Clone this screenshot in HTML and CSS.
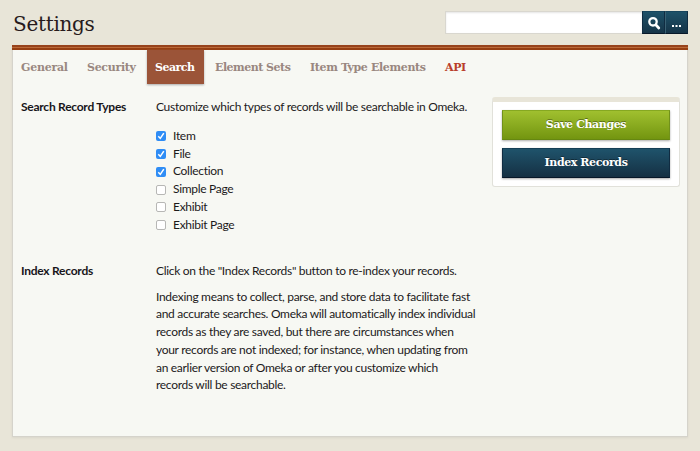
FILE: index.html
```html
<!DOCTYPE html>
<html lang="en">
<head>
<meta charset="utf-8">
<title>Settings</title>
<link rel="stylesheet" href="styles.css">
</head>
<body>
<header class="top">
  <h1 class="title">Settings</h1>
  <form class="search">
    <input class="search-input" type="text" aria-label="Search">
    <button class="search-btn" type="button" aria-label="Submit search"><svg width="14" height="14" viewBox="0 0 14 14"><circle cx="6" cy="5.8" r="3.7" fill="none" stroke="#fff" stroke-width="2.3"/><path d="M9 9l2.8 3" stroke="#fff" stroke-width="2.7" stroke-linecap="round"/></svg></button>
    <button class="search-btn more" type="button" aria-label="Advanced"><svg width="12" height="12" viewBox="0 0 12 12" fill="#fff"><path d="M1 8h2v2H1zM4.500 8h2v2h-2zM8 8h2v2H8z"/></svg></button>
  </form>
</header>
<main class="content">
  <nav class="tabs">
    <a class="tab general">General</a>
    <a class="tab security">Security</a>
    <a class="tab active">Search</a>
    <a class="tab sets">Element Sets</a>
    <a class="tab types">Item Type Elements</a>
    <a class="tab api">API</a>
  </nav>
  <div class="columns">
    <div class="fields">
      <section class="field first">
        <h2 class="label">Search Record Types</h2>
        <div class="inputs">
          <p class="lead">Customize which types of records will be searchable in Omeka.</p>
          <ul class="checks">
            <li class="check"><i class="box on"><svg width="10" height="10" viewBox="0 0 10 10"><path d="M2.300 5.200l2 2.200 3.500-5.300" fill="none" stroke="#fff" stroke-width="1.500"/></svg></i>Item</li>
            <li class="check"><i class="box on"><svg width="10" height="10" viewBox="0 0 10 10"><path d="M2.300 5.200l2 2.200 3.500-5.300" fill="none" stroke="#fff" stroke-width="1.500"/></svg></i>File</li>
            <li class="check"><i class="box on"><svg width="10" height="10" viewBox="0 0 10 10"><path d="M2.300 5.200l2 2.200 3.500-5.300" fill="none" stroke="#fff" stroke-width="1.500"/></svg></i>Collection</li>
            <li class="check"><i class="box"></i>Simple Page</li>
            <li class="check"><i class="box"></i>Exhibit</li>
            <li class="check"><i class="box"></i>Exhibit Page</li>
          </ul>
        </div>
      </section>
      <section class="field">
        <h2 class="label index">Index Records</h2>
        <div class="inputs">
          <p class="click">Click on the "Index Records" button to re-index your records.</p>
          <p class="about">Indexing means to collect, parse, and store data to facilitate fast<br>and accurate searches. Omeka will automatically index individual<br>records as they are saved, but there are circumstances when<br>your records are not indexed; for instance, when updating from<br>an earlier version of Omeka or after you customize which<br>records will be searchable.</p>
        </div>
      </section>
    </div>
    <aside class="panel">
      <button class="btn green" type="button">Save Changes</button>
      <button class="btn blue" type="button">Index Records</button>
    </aside>
  </div>
</main>
</body>
</html>
```
FILE: styles.css
```css
* { box-sizing: border-box; }
body {
  margin: 0;
  height: 451px;
  padding: 0 12px;
  overflow: hidden;
  background: #e8e5d8;
  color: #1c1a1b;
  font: 12px/17.7px Lato, "Liberation Sans", sans-serif;
}
h1, h2, p, ul { margin: 0; padding: 0; }
.top { height: 45px; display: flex; justify-content: space-between; align-items: flex-start; }
.title { padding: 11px 0 0 1px; font: 400 20px/26px "DejaVu Serif", serif; letter-spacing: -0.3px; color: #271a1c; }
.search { display: flex; margin-top: 11px; height: 23px; }
.search-input { width: 197px; height: 23px; padding: 0; border: 1px solid #d9d7cf; border-right: 0; background: #fff; box-shadow: inset 0 1px 2px #e5e5e5; }
.search-btn {
  display: flex; align-items: center; justify-content: center;
  width: 23px; height: 23px; padding: 0;
  border: 1px solid #102c42; border-top-color: #17455d; border-bottom-color: #081829;
  background: linear-gradient(#1e5168, #163448);
}
.search-btn.more { border-left-color: #3a6173; }
.content {
  height: 392px;
  border: 1px solid #d5d3cb; border-top: 0;
  background: #f7f8f3;
  box-shadow: 0 1px 2px #d9d6ca;
}
.content::before { content: ""; display: block; height: 5px; margin: 0 -1px; background: linear-gradient(#97431c 0 2px, #bb6938 2px 3px, #963e12 3px 5px); }
.tabs { display: flex; height: 34px; }
.tab { height: 34px; padding: 0 8px; font: 700 11px/35px "DejaVu Serif", serif; color: #998780; white-space: nowrap; }
.tab.general { width: 66px; letter-spacing: -0.25px; }
.tab.security { width: 68px; letter-spacing: -0.3px; }
.tab.active { width: 57px; color: #fff; background: #9b5438; box-shadow: 0 1px 2px #aaa; letter-spacing: -0.5px; }
.tab.sets { width: 95px; padding-left: 11px; letter-spacing: -0.5px; }
.tab.types { width: 135px; padding-left: 11px; letter-spacing: -0.36px; }
.tab.api { padding-left: 11px; color: #b93e2b; letter-spacing: -0.4px; }
.columns { display: flex; justify-content: space-between; align-items: flex-start; padding: 13px 7px 0 8px; }
.field { display: flex; }
.field.first { height: 165px; }
.label { width: 135px; font-size: 12px; font-weight: 700; line-height: 17.7px; letter-spacing: -0.25px; color: #17151a; }
.inputs { white-space: nowrap; letter-spacing: -0.3px; }
.lead { position: relative; top: 1px; }
.first .label { line-height: 19px; }
.checks { margin-top: 12.4px; list-style: none; }
.check { display: flex; align-items: center; height: 17.7px; }
.box { width: 10px; height: 10px; margin: 1px 7px 0 0; border: 1px solid #b7b7b5; border-radius: 2px; background: #fff; }
.box.on { border: 0; background: #2f8df5; }
.box svg { display: block; }
.about { margin-top: 8px; }
.panel {
  width: 188px; height: 90px; padding: 8px 9px;
  border: 1px solid #e1e1da; border-top: 5px solid #e8e5d8; border-radius: 3px;
  background: #fff;
}
.btn {
  display: block; width: 168px; height: 30px; padding: 0;
  border: 1px solid; color: #fff;
  font: 700 11px/28px "DejaVu Serif", serif; letter-spacing: -0.4px;
  text-shadow: 0 -1px 0 rgba(0,0,0,.4); box-shadow: 0 1px 2px #aaa;
}
.green { border-color: #86a821 #71911a #668711; background: linear-gradient(#a0c02f, #739510); }
.blue { margin-top: 8px; border-color: #153e56 #102c42 #071728; background: linear-gradient(#1f536b, #153043); letter-spacing: -0.4px; }
```
